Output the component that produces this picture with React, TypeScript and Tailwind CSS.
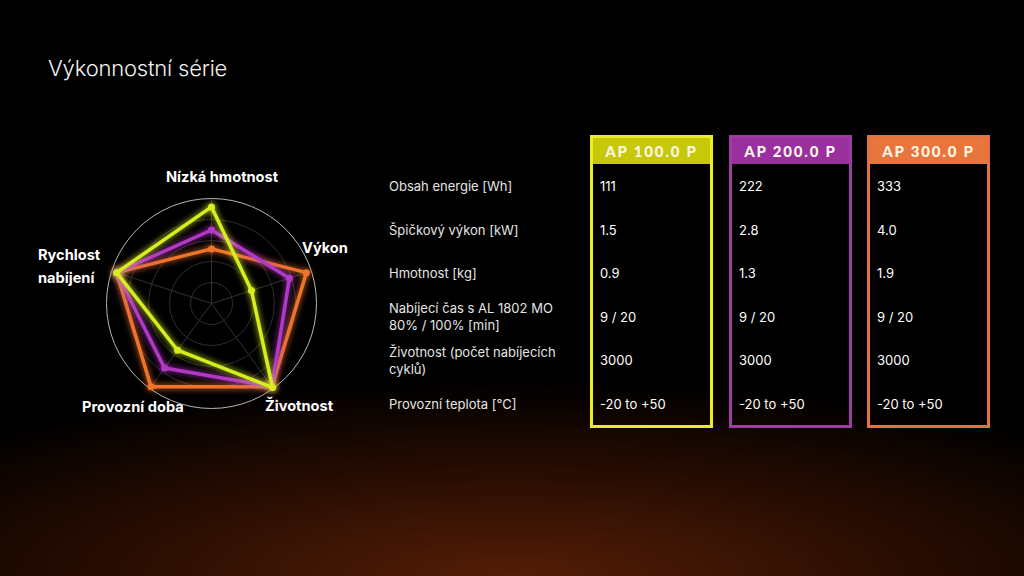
import React from "react";

const rows = [
  "Obsah energie [Wh]",
  "Špičkový výkon [kW]",
  "Hmotnost [kg]",
  "Nabíjecí čas s AL 1802 MO 80% / 100% [min]",
  "Životnost (počet nabíjecích cyklů)",
  "Provozní teplota [°C]",
];

const models = [
  {
    name: "AP 100.0 P",
    border: "border-[#ecec22]",
    head: "bg-[#c8c80a]",
    values: ["111", "1.5", "0.9", "9 / 20", "3000", "-20 to +50"],
  },
  {
    name: "AP 200.0 P",
    border: "border-[#a03ca6]",
    head: "bg-[#9a2f9e]",
    values: ["222", "2.8", "1.3", "9 / 20", "3000", "-20 to +50"],
  },
  {
    name: "AP 300.0 P",
    border: "border-[#e2733f]",
    head: "bg-[#e8763c]",
    values: ["333", "4.0", "1.9", "9 / 20", "3000", "-20 to +50"],
  },
];

// radar geometry in svg coords
const CX = 181.5;
const CY = 148.5;
const R = 105;

const pt = (i: number, v: number) => {
  const a = ((90 - 72 * i) * Math.PI) / 180;
  return [CX + R * v * Math.cos(a), CY - R * v * Math.sin(a)];
};

const series = [
  { color: "#f0732c", values: [0.52, 0.95, 0.98, 0.98, 0.95] },
  { color: "#b238c6", values: [0.7, 0.78, 0.98, 0.76, 0.95] },
  { color: "#d6ee1e", values: [0.92, 0.4, 0.99, 0.55, 0.95] },
];

const Radar = () => (
  <svg width={330} height={270} viewBox="0 0 330 270" className="mt-[20px] ml-[30px] shrink-0">
    <defs>
      <filter id="glow" x="-20%" y="-20%" width="140%" height="140%">
        <feGaussianBlur stdDeviation="3" result="b" />
        <feMerge>
          <feMergeNode in="b" />
          <feMergeNode in="SourceGraphic" />
        </feMerge>
      </filter>
    </defs>
    {[21, 42, 63, 84].map((r) => (
      <circle key={r} cx={CX} cy={CY} r={r} fill="none" stroke="#2e2e2e" strokeWidth={1} />
    ))}
    <circle cx={CX} cy={CY} r={R} fill="none" stroke="#b5b5b5" strokeWidth={1} />
    {[0, 1, 2, 3, 4].map((i) => {
      const [x, y] = pt(i, 1);
      return <line key={i} x1={CX} y1={CY} x2={x} y2={y} stroke="#333" strokeWidth={1} />;
    })}
    {series.map((s) => {
      const pts = s.values.map((v, i) => pt(i, v));
      return (
        <g key={s.color} filter="url(#glow)">
          <polygon
            points={pts.map((p) => p.join(",")).join(" ")}
            fill="none"
            stroke={s.color}
            strokeWidth={3.5}
            strokeLinejoin="round"
          />
          {pts.map((p, i) => (
            <circle key={i} cx={p[0]} cy={p[1]} r={3.5} fill={s.color} />
          ))}
        </g>
      );
    })}
    <g fill="#ffffff" fontFamily="Inter, 'Liberation Sans', sans-serif" fontWeight={700} fontSize={14.6}>
      <text x={192} y={27} textAnchor="middle">Nízká hmotnost</text>
      <text x={272} y={98}>Výkon</text>
      <text x={8} y={105}>Rychlost</text>
      <text x={8} y={128}>nabíjení</text>
      <text x={52} y={257}>Provozní doba</text>
      <text x={235} y={256}>Životnost</text>
    </g>
  </svg>
);

export default function App() {
  return (
    <div
      className="w-[1024px] h-[576px] overflow-hidden bg-black bg-[radial-gradient(ellipse_75%_34%_at_50%_100%,#541d06_0%,#260c02_55%,#000000_100%)] flex flex-col"
      style={{ fontFamily: "Inter, 'Liberation Sans', sans-serif" }}
    >
      <div className="h-[135px] pl-[48px] pt-[54px]">
        <h1 className="text-[22px] leading-[28px] font-light text-[#f2f2f2] tracking-[-0.2px]">
          Výkonnostní série
        </h1>
      </div>
      <div className="flex items-start">
        <Radar />
        <div className="ml-[29px] flex">
          <div className="w-[201px] pt-[29px] text-[13px] text-[#e4e4e4]">
            {rows.map((r) => (
              <div key={r} className="h-[43.5px] flex items-center leading-[17px] pr-[10px] pt-[2px]">
                {r}
              </div>
            ))}
          </div>
          {models.map((m, idx) => (
            <div
              key={m.name}
              className={`w-[123px] border-[3px] ${m.border} ${idx === 0 ? "" : idx === 1 ? "ml-[16px]" : "ml-[15px]"}`}
            >
              <div
                className={`${m.head} h-[26px] flex items-center justify-center text-[15px] font-black tracking-[1.8px] text-[#fbf6e6]`}
                style={{ fontFamily: "Lato, 'DejaVu Sans', sans-serif" }}
              >
                {m.name}
              </div>
              {m.values.map((v, i) => (
                <div key={i} className="h-[43.5px] flex items-center pl-[7px] pt-[2px] text-[13px] text-white">
                  {v}
                </div>
              ))}
            </div>
          ))}
        </div>
      </div>
    </div>
  );
}
